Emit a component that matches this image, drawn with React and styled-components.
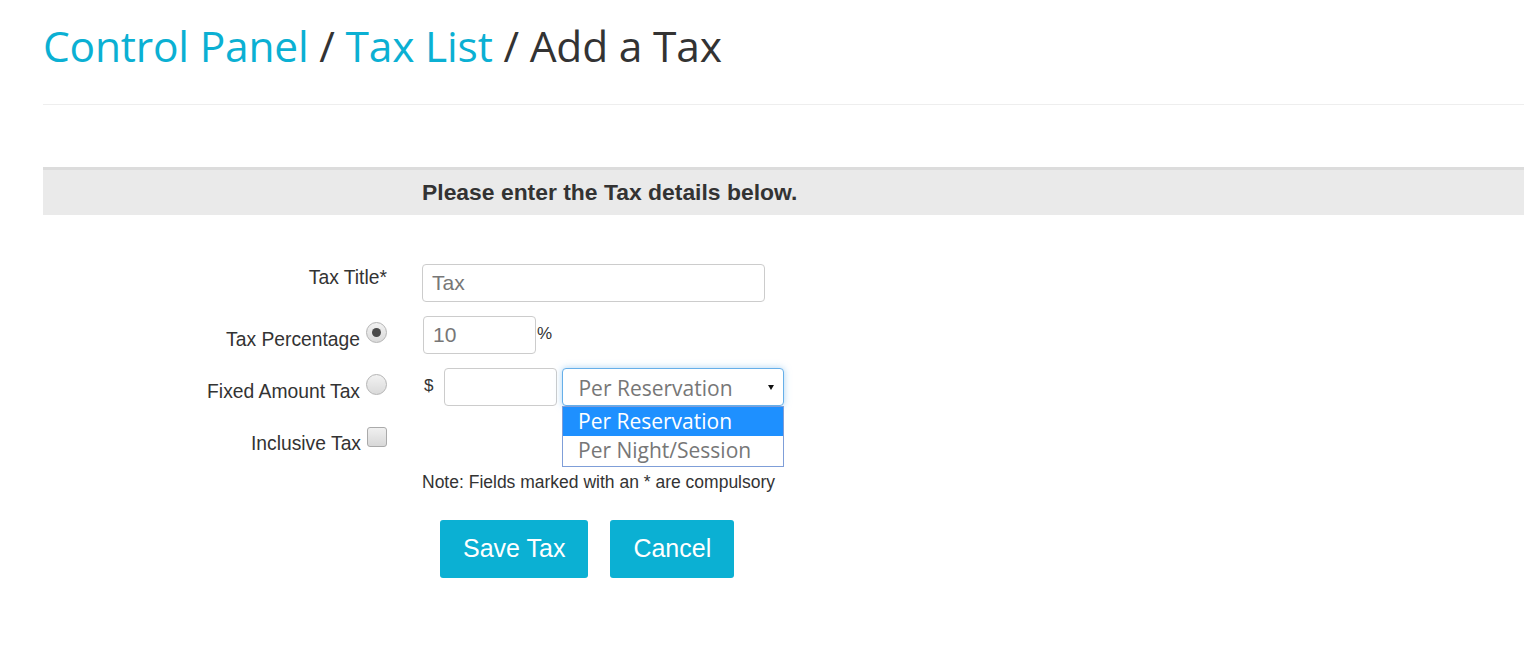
import React from 'react'
import styled, { createGlobalStyle } from 'styled-components'

const GlobalStyle = createGlobalStyle`
  html, body {
    margin: 0;
    padding: 0;
    background: #fff;
    font-family: "Liberation Sans", Arial, sans-serif;
    color: #333;
  }
`

const Page = styled.div`
  padding-left: 43px;
  min-height: 645px;
`

const Header = styled.div`
  border-bottom: 1px solid #eee;
`

const Title = styled.h1`
  margin: 23px 0 34px;
  font-family: "Open Sans", sans-serif;
  font-weight: 400;
  font-size: 42.5px;
  line-height: 1.1;
  color: #333;
  letter-spacing: -0.2px;
`

const Crumb = styled.a`
  color: #0bb0d3;
  text-decoration: none;
`

const Band = styled.div`
  margin-top: 62px;
  border-top: 3px solid #dcdcdc;
  background: #eaeaea;
  height: 45px;
  line-height: 45px;
  padding-left: 379px;
  font-weight: 700;
  font-size: 22.9px;
  color: #333;
`

const Form = styled.div`
  margin-top: 49px;
  display: grid;
  grid-template-columns: 344px 1fr;
  column-gap: 35px;
  row-gap: 14px;
`

const LabelCell = styled.div`
  display: flex;
  justify-content: flex-end;
  align-items: flex-start;
  gap: 6px;
  padding-top: ${p => p.$top}px;
`

const Label = styled.label`
  font-size: 19.3px;
  line-height: 22px;
  color: #333;
`

const Radio = styled.span`
  width: 21px;
  height: 21px;
  margin-top: -7px;
  box-sizing: border-box;
  border-radius: 50%;
  border: 1px solid #b4b4b4;
  background: linear-gradient(#f2f2f2, #dadada);
  display: flex;
  align-items: center;
  justify-content: center;
  &::after {
    content: '';
    width: 9px;
    height: 9px;
    border-radius: 50%;
    background: #4a4a4a;
    display: ${p => (p.$checked ? 'block' : 'none')};
  }
`

const Check = styled.span`
  width: 20px;
  height: 20px;
  margin-top: -6px;
  box-sizing: border-box;
  border-radius: 3px;
  border: 1px solid #aaa;
  background: linear-gradient(#f0f0f0, #d8d8d8);
`

const ControlCell = styled.div`
  display: flex;
  align-items: flex-start;
  position: relative;
  min-height: 38px;
`

const TextInput = styled.div`
  box-sizing: border-box;
  width: ${p => p.$w}px;
  height: 38px;
  margin-left: ${p => p.$ml || 0}px;
  border: 1px solid #ccc;
  border-radius: 4px;
  padding-left: 9px;
  font-size: 21px;
  line-height: 36px;
  color: #777;
  background: #fff;
`

const Unit = styled.span`
  font-size: 17px;
  line-height: 20px;
  color: #333;
  padding-top: ${p => p.$top}px;
  margin: 0 ${p => p.$mr || 0}px 0 ${p => p.$ml || 0}px;
`

const SelectBox = styled.div`
  position: relative;
  box-sizing: border-box;
  width: 222px;
  height: 38px;
  margin-left: 5px;
  border: 1px solid #66afe9;
  border-radius: 4px;
  box-shadow: 0 0 7px rgba(102, 175, 233, 0.55);
  padding-left: 15px;
  font-family: "Open Sans", sans-serif;
  font-size: 21px;
  line-height: 38px;
  color: #777;
  background: #fff;
  &::after {
    content: '';
    position: absolute;
    right: 9px;
    top: 16px;
    border-left: 3.5px solid transparent;
    border-right: 3.5px solid transparent;
    border-top: 5px solid #111;
  }
`

const Dropdown = styled.ul`
  position: absolute;
  left: 140px;
  top: 38px;
  width: 222px;
  box-sizing: border-box;
  margin: 0;
  padding: 0;
  list-style: none;
  border: 1px solid #7f9ed8;
  background: #fff;
  z-index: 2;
`

const Option = styled.li`
  height: 29.5px;
  line-height: 29px;
  padding-left: 15px;
  font-family: "Open Sans", sans-serif;
  font-size: 21px;
  color: ${p => (p.$active ? '#fff' : '#777')};
  background: ${p => (p.$active ? '#1e90ff' : '#fff')};
`

const Note = styled.div`
  grid-column: 2;
  font-size: 17.5px;
  line-height: 20px;
  color: #333;
`

const Actions = styled.div`
  grid-column: 2;
  display: flex;
  gap: 22px;
  margin: 14px 0 0 18px;
`

const Button = styled.button`
  height: 58px;
  padding: 0 23px;
  border: none;
  border-radius: 3px;
  background: #0bb0d3;
  color: #fff;
  font-family: "Liberation Sans", Arial, sans-serif;
  font-size: 25px;
  cursor: pointer;
`

export default function App() {
  return (
    <Page>
      <GlobalStyle />
      <Header>
        <Title>
          <Crumb href="#">Control Panel</Crumb> / <Crumb href="#">Tax List</Crumb> / Add a Tax
        </Title>
      </Header>

      <Band>Please enter the Tax details below.</Band>

      <Form>
        <LabelCell $top={3}>
          <Label>Tax Title*</Label>
        </LabelCell>
        <ControlCell>
          <TextInput $w={343}>Tax</TextInput>
        </ControlCell>

        <LabelCell $top={13}>
          <Label>Tax Percentage</Label>
          <Radio $checked />
        </LabelCell>
        <ControlCell>
          <TextInput $w={113} $ml={1}>10</TextInput>
          <Unit $top={8} $ml={1}>%</Unit>
        </ControlCell>

        <LabelCell $top={13}>
          <Label>Fixed Amount Tax</Label>
          <Radio />
        </LabelCell>
        <ControlCell>
          <Unit $top={8} $ml={2} $mr={11}>$</Unit>
          <TextInput $w={113} />
          <SelectBox>Per Reservation</SelectBox>
          <Dropdown>
            <Option $active>Per Reservation</Option>
            <Option>Per Night/Session</Option>
          </Dropdown>
        </ControlCell>

        <LabelCell $top={13}>
          <Label>Inclusive Tax</Label>
          <Check />
        </LabelCell>
        <ControlCell />

        <Note>Note: Fields marked with an * are compulsory</Note>

        <Actions>
          <Button>Save Tax</Button>
          <Button>Cancel</Button>
        </Actions>
      </Form>
    </Page>
  )
}
